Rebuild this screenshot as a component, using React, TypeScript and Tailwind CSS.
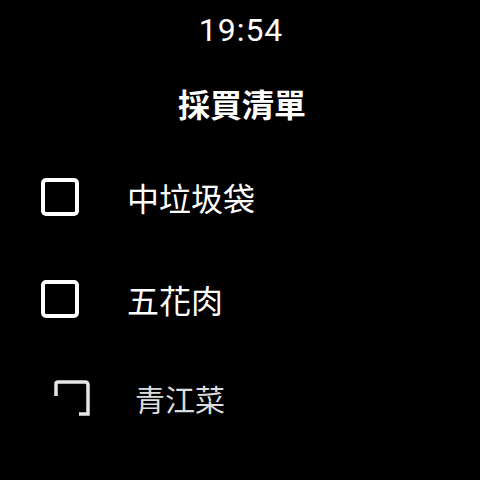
import React from 'react';

const items = [
  { label: '中垃圾袋', dim: false },
  { label: '五花肉', dim: false },
];

function Box() {
  return <div className="h-[38px] w-[38px] rounded-[5px] border-[4px] border-white" />;
}

export default function App() {
  return (
    <div
      className="flex h-[480px] w-[480px] flex-col overflow-hidden bg-black text-white"
      style={{ fontFamily: '"Noto Sans CJK TC", "Noto Sans", sans-serif' }}
    >
      <div
        className="flex h-[60px] items-center justify-center pl-[2px] text-[32px] tracking-[1px]"
        style={{ fontFamily: 'Roboto, sans-serif' }}
      >
        19:54
      </div>
      <h1 className="flex h-[86px] items-center justify-center pl-[4px] text-[32px] font-bold">
        採買清單
      </h1>
      <ul className="flex flex-col">
        {items.map((it) => (
          <li key={it.label} className="flex h-[102px] items-center pl-[41px]">
            <Box />
            <span className="ml-[48px] text-[32px] leading-none">{it.label}</span>
          </li>
        ))}
        <li className="flex h-[96px] items-center pl-[54px]">
          <svg width="37" height="37" viewBox="0 0 37 37" className="text-[#e6e6e6]">
            <path
              d="M2 16 V4 Q2 2 4 2 H31 Q34 2 34 5 V34 H25"
              fill="none"
              stroke="currentColor"
              strokeWidth="3.5"
            />
          </svg>
          <span className="ml-[44px] text-[30px] leading-none text-[#dcdcdc]">青江菜</span>
        </li>
      </ul>
    </div>
  );
}
